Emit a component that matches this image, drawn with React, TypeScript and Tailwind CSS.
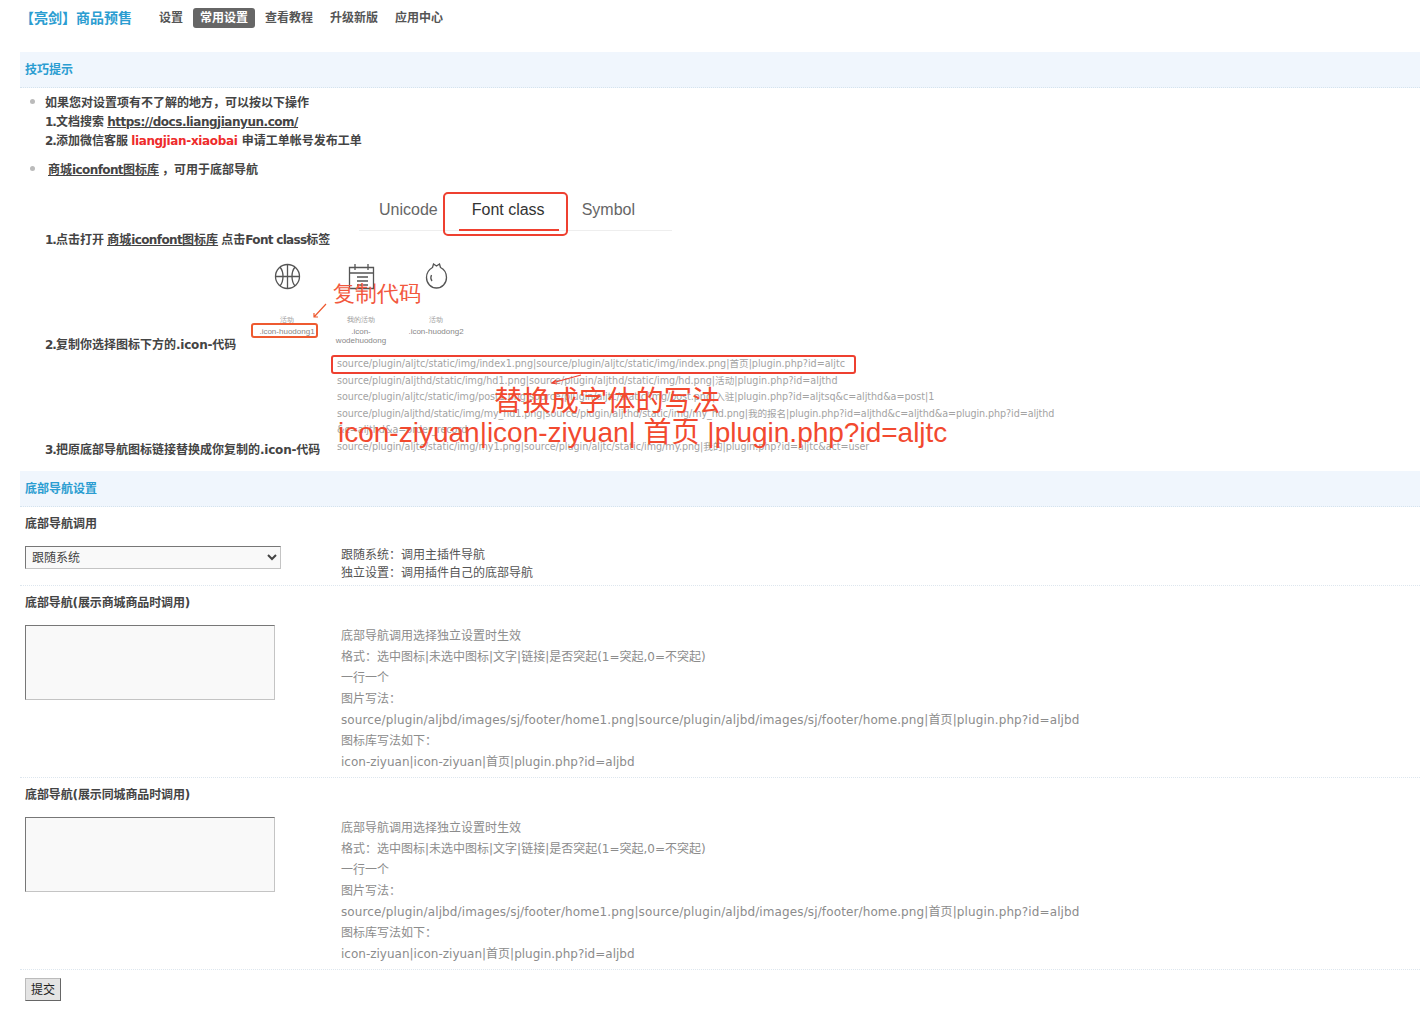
import React from 'react';

const navItems = ['设置', '常用设置', '查看教程', '升级新版', '应用中心'];

const pathLines = [
  { text: 'source/plugin/aljtc/static/img/index1.png|source/plugin/aljtc/static/img/index.png|首页|plugin.php?id=aljtc', cls: 'whitespace-nowrap' },
  { text: 'source/plugin/aljthd/static/img/hd1.png|source/plugin/aljthd/static/img/hd.png|活动|plugin.php?id=aljthd', cls: 'whitespace-nowrap' },
  { text: 'source/plugin/aljtc/static/img/post1.png|source/plugin/aljtc/static/img/post.png|入驻|plugin.php?id=aljtsq&c=aljthd&a=post|1', cls: 'whitespace-nowrap tracking-[-0.04px]' },
  { text: 'source/plugin/aljthd/static/img/my_hd1.png|source/plugin/aljthd/static/img/my_hd.png|我的报名|plugin.php?id=aljthd&c=aljthd&a=plugin.php?id=aljthd', cls: 'whitespace-nowrap tracking-[-0.08px]' },
  { text: '&c=aljthd&a=order_record', cls: 'whitespace-nowrap' },
  { text: 'source/plugin/aljtc/static/img/my1.png|source/plugin/aljtc/static/img/my.png|我的|plugin.php?id=aljtc&act=user', cls: 'whitespace-nowrap tracking-[-0.03px]' },
];

const helpLines = [
  '底部导航调用选择独立设置时生效',
  '格式：选中图标|未选中图标|文字|链接|是否突起(1=突起,0=不突起)',
  '一行一个',
  '图片写法：',
  'source/plugin/aljbd/images/sj/footer/home1.png|source/plugin/aljbd/images/sj/footer/home.png|首页|plugin.php?id=aljbd',
  '图标库写法如下：',
  'icon-ziyuan|icon-ziyuan|首页|plugin.php?id=aljbd',
];

// bold latin runs are wider here than in the screenshot
function L({ children }: { children: React.ReactNode }) {
  return <span className="tracking-[-1px]">{children}</span>;
}

function SectionTitle({ children }: { children: React.ReactNode }) {
  return (
    <div className="h-[36px] pl-[5px] flex items-center bg-[#f0f6fd] border-b border-dotted border-[#d5e3ee] text-[12px] font-bold text-[#2b9dd1]">
      {children}
    </div>
  );
}

function Help({ lines }: { lines: string[] }) {
  return (
    <div className="ml-[66px] pt-[2px] text-[12px] leading-[21px] text-[#8c8c8c]">
      {lines.map((l) => (
        <div key={l} className={l.startsWith('source') ? 'whitespace-nowrap tracking-[0.12px]' : 'whitespace-nowrap'}>
          {l}
        </div>
      ))}
    </div>
  );
}

function TextRow({ label }: { label: string }) {
  return (
    <div className="border-b border-dotted border-[#dde6ee]">
      <div className="h-[33px] pl-[5px] pt-[8px] leading-[18px] font-bold text-[#444] tracking-[-0.12px]">{label}</div>
      <div className="flex pl-[5px] pt-[5px] pb-[4px]">
        <textarea className="w-[250px] h-[75px] mt-[1px] bg-[#f9f9f9] border border-[#c4c4c4] border-l-[#777] border-t-[#777] block resize-none" />
        <Help lines={helpLines} />
      </div>
    </div>
  );
}

export default function App() {
  return (
    <div className="min-h-[1029px] bg-white text-[12px] text-[#444] font-['DejaVu_Sans','Noto_Sans_CJK_SC',sans-serif]">
      {/* top nav */}
      <div className="h-[36px] pl-[25px] flex items-center">
        <span className="w-[128px] ml-[-5px] mr-[5px] text-[14px] font-bold text-[#2b9dd1] whitespace-nowrap">【亮剑】商品预售</span>
        <div className="flex items-center gap-[5px] text-[#555] font-semibold">
          {navItems.map((n) => (
            <span
              key={n}
              className={n === '常用设置' ? 'mx-[-1px] px-[7px] h-[20px] leading-[20px] rounded-[3px] bg-[#666] text-white font-bold' : 'px-[6px]'}
            >
              {n}
            </span>
          ))}
        </div>
      </div>

      <div className="ml-[20px] mr-[5px] mt-[16px]">
        <SectionTitle>技巧提示</SectionTitle>

        {/* tips */}
        <ul className="pt-[6px] pl-[25px] font-bold leading-[19px] text-[#444]">
          <li className="relative">
            <span className="absolute left-[-15px] top-[5px] w-[5px] h-[5px] rounded-full bg-[#bbb]" />
            如果您对设置项有不了解的地方，可以按以下操作
            <br />
            <L>1.</L>文档搜索<L> </L><span className="underline tracking-[-0.47px]">https://docs.liangjianyun.com/</span>
            <br />
            <L>2.</L>添加微信客服<L> </L><span className="text-[#ee2b2b] tracking-[-0.35px]">liangjian-xiaobai</span> 申请工单帐号发布工单
          </li>
          <li className="relative mt-[10px] pl-[3px]">
            <span className="absolute left-[-15px] top-[5px] w-[5px] h-[5px] rounded-full bg-[#bbb]" />
            <span className="underline">商城<span className="tracking-[-0.6px]">iconfont</span>图标库</span>
            <span className="ml-[3px]">，可用于底部导航</span>
          </li>
        </ul>

        {/* step 1 */}
        <div className="flex items-end pl-[25px] mt-[10px] font-bold">
          <div className="w-[314px] leading-[12px] whitespace-nowrap">
            <L>1.</L>点击打开<L> </L><span className="underline">商城<span className="tracking-[-0.6px]">iconfont</span>图标库</span><L> </L>点击<span className="tracking-[-0.7px]">Font class</span>标签
          </div>
          <div className="w-[313px] h-[56px] font-['Liberation_Sans',sans-serif] font-normal">
            <div className="relative h-[41px] pl-[20px] border-b border-[#eee] flex items-center text-[16px] text-[#666]">
              <span>Unicode</span>
              <span className="ml-[34px] text-[#333]">Font class</span>
              <span className="ml-[37px]">Symbol</span>
              <div className="absolute left-[100px] bottom-[-1px] w-[100px] h-[2px] bg-[#f0402f]" />
              <div className="absolute left-[84px] top-[2px] w-[125px] h-[44px] border-[2.5px] border-[#ee4030] rounded-[5px]" />
            </div>
          </div>
        </div>

        {/* step 2 */}
        <div className="flex items-end pl-[25px] mt-[10px] font-bold">
          <div className="w-[205px] leading-[12px] whitespace-nowrap">
            <L>2.</L>复制你选择图标下方的<span className="tracking-[-0.2px]">.icon-</span>代码
          </div>
          <div className="relative w-[230px] h-[95px] font-['Liberation_Sans',sans-serif] font-normal text-[7px] leading-[9px] text-[#999] text-center">
            <div className="flex pt-[7px]">
              <div className="w-[74px]">
                <svg className="mx-auto" width="27" height="27" viewBox="0 0 27 27" fill="none" stroke="#555" strokeWidth="1.3">
                  <circle cx="13.5" cy="13.5" r="12" />
                  <path d="M13.5 1.5v24M1.5 13.5h24M6 4c4 5 4 14 0 19M21 4c-4 5-4 14 0 19" />
                </svg>
                <div className="mt-[25px]">活动</div>
                <div className="mt-[3px] text-[8px] text-[#888]">.icon-huodong1</div>
              </div>
              <div className="w-[74px]">
                <svg className="mx-auto" width="27" height="27" viewBox="0 0 27 27" fill="none" stroke="#555" strokeWidth="1.3">
                  <path d="M1.5 4.5h24v21h-24zM1.5 10h24M7 1v6M20 1v6M9 14h11M9 18h11M9 22h11" />
                </svg>
                <div className="mt-[25px]">我的活动</div>
                <div className="mt-[3px] text-[8px] text-[#888]">.icon-<br />wodehuodong</div>
              </div>
              <div className="w-[74px] ml-[1px]">
                <svg className="mx-auto" width="27" height="27" viewBox="0 0 27 27" fill="none" stroke="#555" strokeWidth="1.3">
                  <path d="M13.5 3l3-2 1 3.500c4 2 6 5.500 6 10 0 6-4.500 10.500-10 10.500S3.500 20.500 3.500 14.500c0-4.500 2.500-8 6-10l1-3.500z" />
                  <path d="M8.500 12c-1 2-1 4 .5 6" />
                </svg>
                <div className="mt-[25px]">活动</div>
                <div className="mt-[3px] text-[8px] text-[#888]">.icon-huodong2</div>
              </div>
            </div>
            <div className="absolute left-[1px] top-[67px] w-[67px] h-[15px] border-2 border-[#ee5a30] rounded-[3px]" />
            <div className="absolute left-[83px] top-[23px] text-[22px] leading-[30px] text-[#f2583e] whitespace-nowrap">复制代码</div>
            <svg className="absolute left-[62px] top-[46px]" width="16" height="18" viewBox="0 0 16 18" fill="none" stroke="#ee5a30" strokeWidth="1.2">
              <path d="M14 2 2 15M2 11v4h4" />
            </svg>
          </div>
        </div>

        {/* step 3 */}
        <div className="flex items-end pl-[25px] mt-[2px] font-bold">
          <div className="w-[286px] leading-[12px] whitespace-nowrap">
            <L>3.</L>把原底部导航图标链接替换成你复制的<span className="tracking-[-0.2px]">.icon-</span>代码
          </div>
          <div className="relative w-[729px] h-[103px] font-normal pl-[6px] pt-[3px] text-[9.6px] leading-[16.5px] text-[#a3a3a3]">
            {pathLines.map((l) => (
              <div key={l.text} className={l.cls}>{l.text}</div>
            ))}
            <div className="absolute left-[0px] top-[2px] w-[525px] h-[19px] border-2 border-[#ee4030] rounded-[3px]" />
            <svg className="absolute left-[218px] top-[21px]" width="34" height="12" viewBox="0 0 34 12" fill="none" stroke="#ee4030" strokeWidth="1.200">
              <path d="M32 1 3 9M7 6 3 9l5 1" />
            </svg>
            <div className="absolute left-[163px] top-[28px] text-[28.3px] leading-[36px] text-[#f2492f] whitespace-nowrap font-['Noto_Sans_CJK_SC',sans-serif]">替换成字体的写法</div>
            <div className="absolute left-[7px] top-[62px] text-[28px] leading-[36px] text-[#f2492f] whitespace-nowrap font-['Liberation_Sans','Noto_Sans_CJK_SC',sans-serif]">
              icon-ziyuan|icon-ziyuan| 首页 |plugin.php?id=aljtc
            </div>
          </div>
        </div>

        <div className="mt-[15px]">
          <SectionTitle>底部导航设置</SectionTitle>
        </div>

        {/* nav select row */}
        <div className="border-b border-dotted border-[#dde6ee]">
          <div className="h-[34px] pl-[5px] pt-[8px] leading-[18px] font-bold text-[#444]">底部导航调用</div>
          <div className="flex pl-[5px] pt-[5px] pb-[3px]">
            <select className="w-[256px] h-[23px] pl-[2px] bg-[#f9f9f9] border border-[#c4c4c4] border-l-[#777] border-t-[#777] text-[12px] text-[#444] appearance-auto">
              <option>跟随系统</option>
              <option>独立设置</option>
            </select>
            <div className="ml-[60px] leading-[18px] text-[#555]">
              <div>跟随系统：调用主插件导航</div>
              <div>独立设置：调用插件自己的底部导航</div>
            </div>
          </div>
        </div>

        <TextRow label="底部导航(展示商城商品时调用)" />
        <TextRow label="底部导航(展示同城商品时调用)" />

        <div className="pl-[5px] pt-[8px]">
          <button className="w-[36px] h-[23px] bg-[#e4e4e4] border border-[#bbb] border-r-[#666] border-b-[#666] text-[12px] text-[#222]">提交</button>
        </div>
      </div>
    </div>
  );
}
